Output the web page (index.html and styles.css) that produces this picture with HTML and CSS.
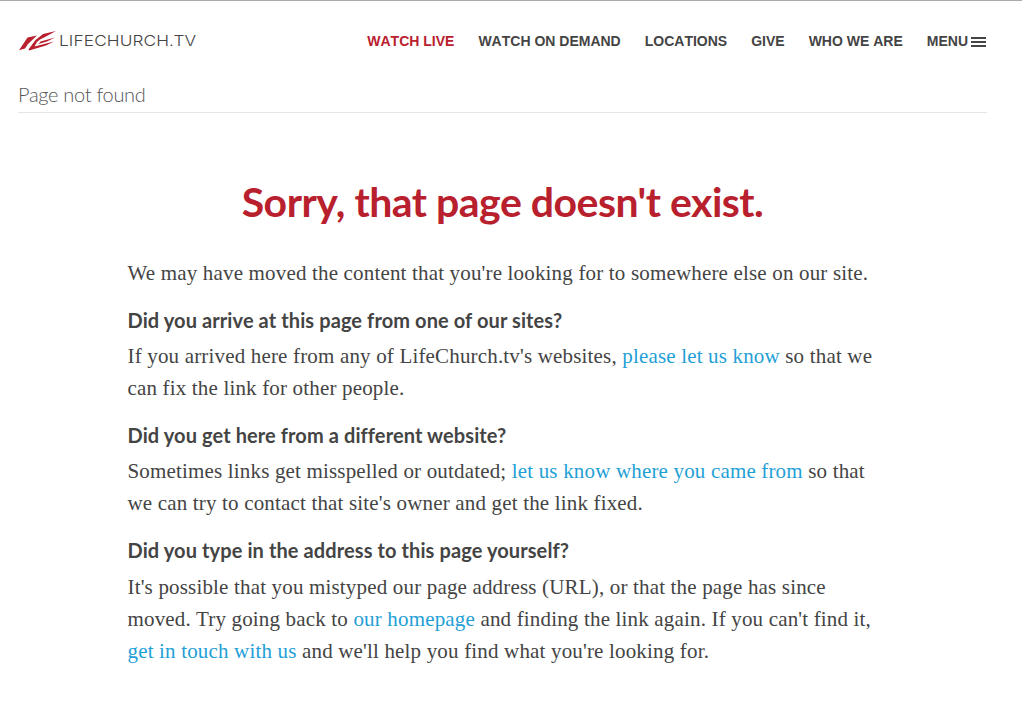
FILE: index.html
```html
<!DOCTYPE html>
<html lang="en">
<head>
    <meta charset="UTF-8">
    <meta name="viewport" content="width=device-width, initial-scale=1.0">
    <title>Page not found - LifeChurch.tv</title>
    <link rel="stylesheet" href="styles.css">
</head>
<body>
    <header class="site-header">
        <a class="logo" href="#">
            <svg class="logo-mark" width="37" height="20" viewBox="0 0 37 20" xmlns="http://www.w3.org/2000/svg">
                <path d="M0 19.3 L8.5 6.5 L18 4.5 L9 13 L6 17.5z"/>
                <path d="M9.5 18.5 L16.5 9 L24 3 L37 0 L26 6 L21 8.5 L18 11 L15.5 15.5 L35 10.5 L27 14.5 L10 19.5z"/>
                <path d="M21.5 10.5 L36 6.5 L28 10.5 L19.5 13z"/>
            </svg>
            <span class="logo-text">LIFECHURCH.TV</span>
        </a>
        <nav class="main-nav">
            <a class="nav-link live" href="#">WATCH LIVE</a>
            <a class="nav-link" href="#">WATCH ON DEMAND</a>
            <a class="nav-link" href="#">LOCATIONS</a>
            <a class="nav-link" href="#">GIVE</a>
            <a class="nav-link" href="#">WHO WE ARE</a>
            <a class="nav-link menu" href="#">MENU<span class="burger"></span></a>
        </nav>
    </header>
    <div class="wrap">
        <div class="page-title">Page not found</div>
        <main class="content">
            <h1>Sorry, that page doesn't exist.</h1>
            <p>We may have moved the content that you're looking for to somewhere else on our site.</p>
            <h2>Did you arrive at this page from one of our sites?</h2>
            <p>If you arrived here from any of LifeChurch.tv's websites, <a href="#">please let us know</a> so that we can fix the link for other people.</p>
            <h2>Did you get here from a different website?</h2>
            <p>Sometimes links get misspelled or outdated; <a href="#">let us know where you came from</a> so that we can try to contact that site's owner and get the link fixed.</p>
            <h2>Did you type in the address to this page yourself?</h2>
            <p>It's possible that you mistyped our page address (URL), or that the page has since moved. Try going back to <a href="#">our homepage</a> and finding the link again. If you can't find it, <a href="#">get in touch with us</a> and we'll help you find what you're looking for.</p>
        </main>
    </div>
</body>
</html>
```
FILE: styles.css
```css
body {
    margin: 0;
    border-top: 1px solid #aaa;
    background: #fff;
    color: #444;
    font-family: "Liberation Serif", serif;
}
a {
    text-decoration: none;
}
.site-header {
    display: flex;
    justify-content: space-between;
    align-items: center;
    height: 79px;
    padding: 0 36px 0 19px;
}
.logo {
    display: flex;
    align-items: center;
    gap: 3px;
    color: #444;
}
.logo-mark {
    fill: #b9202e;
}
.logo-text {
    font-family: "Inter", sans-serif;
    font-weight: 300;
    font-size: 15px;
    letter-spacing: 0.1px;
    transform: scaleX(1.15);
    transform-origin: left center;
}
.main-nav {
    display: flex;
    gap: 24px;
}
.nav-link {
    display: flex;
    align-items: center;
    font-family: "Liberation Sans", sans-serif;
    font-size: 14px;
    font-weight: bold;
    font-kerning: none;
    color: #444;
}
.nav-link.live {
    color: #b9202e;
}
.burger {
    width: 15px;
    height: 6px;
    margin-left: 3px;
    margin-top: 3px;
    border-top: 2px solid #444;
    border-bottom: 2px solid #444;
    background: linear-gradient(#444, #444) center / 100% 2px no-repeat;
}
.wrap {
    margin: 0 35px 0 18px;
}
.page-title {
    padding-bottom: 3px;
    border-bottom: 1px solid #e5e5e5;
    font-family: "Lato", sans-serif;
    font-weight: 300;
    font-size: 20px;
    letter-spacing: -0.3px;
    line-height: 29px;
    color: #555;
}
.content {
    width: 750px;
    margin: 0 auto;
    font-size: 21px;
    letter-spacing: 0.17px;
    line-height: 32px;
}
h1 {
    margin: 63px 0 29px;
    text-align: center;
    font-family: "Lato", sans-serif;
    font-size: 41px;
    font-weight: 700;
    line-height: 52px;
    letter-spacing: -0.5px;
    color: #b9202e;
}
h2 {
    margin: 14.5px 0 4.7px;
    font-family: "Lato", sans-serif;
    font-size: 20px;
    font-weight: 700;
    line-height: 32px;
    letter-spacing: 0.1px;
    color: #444;
}
p {
    margin: 0;
}
.content a {
    color: #1f9fd6;
}
```
